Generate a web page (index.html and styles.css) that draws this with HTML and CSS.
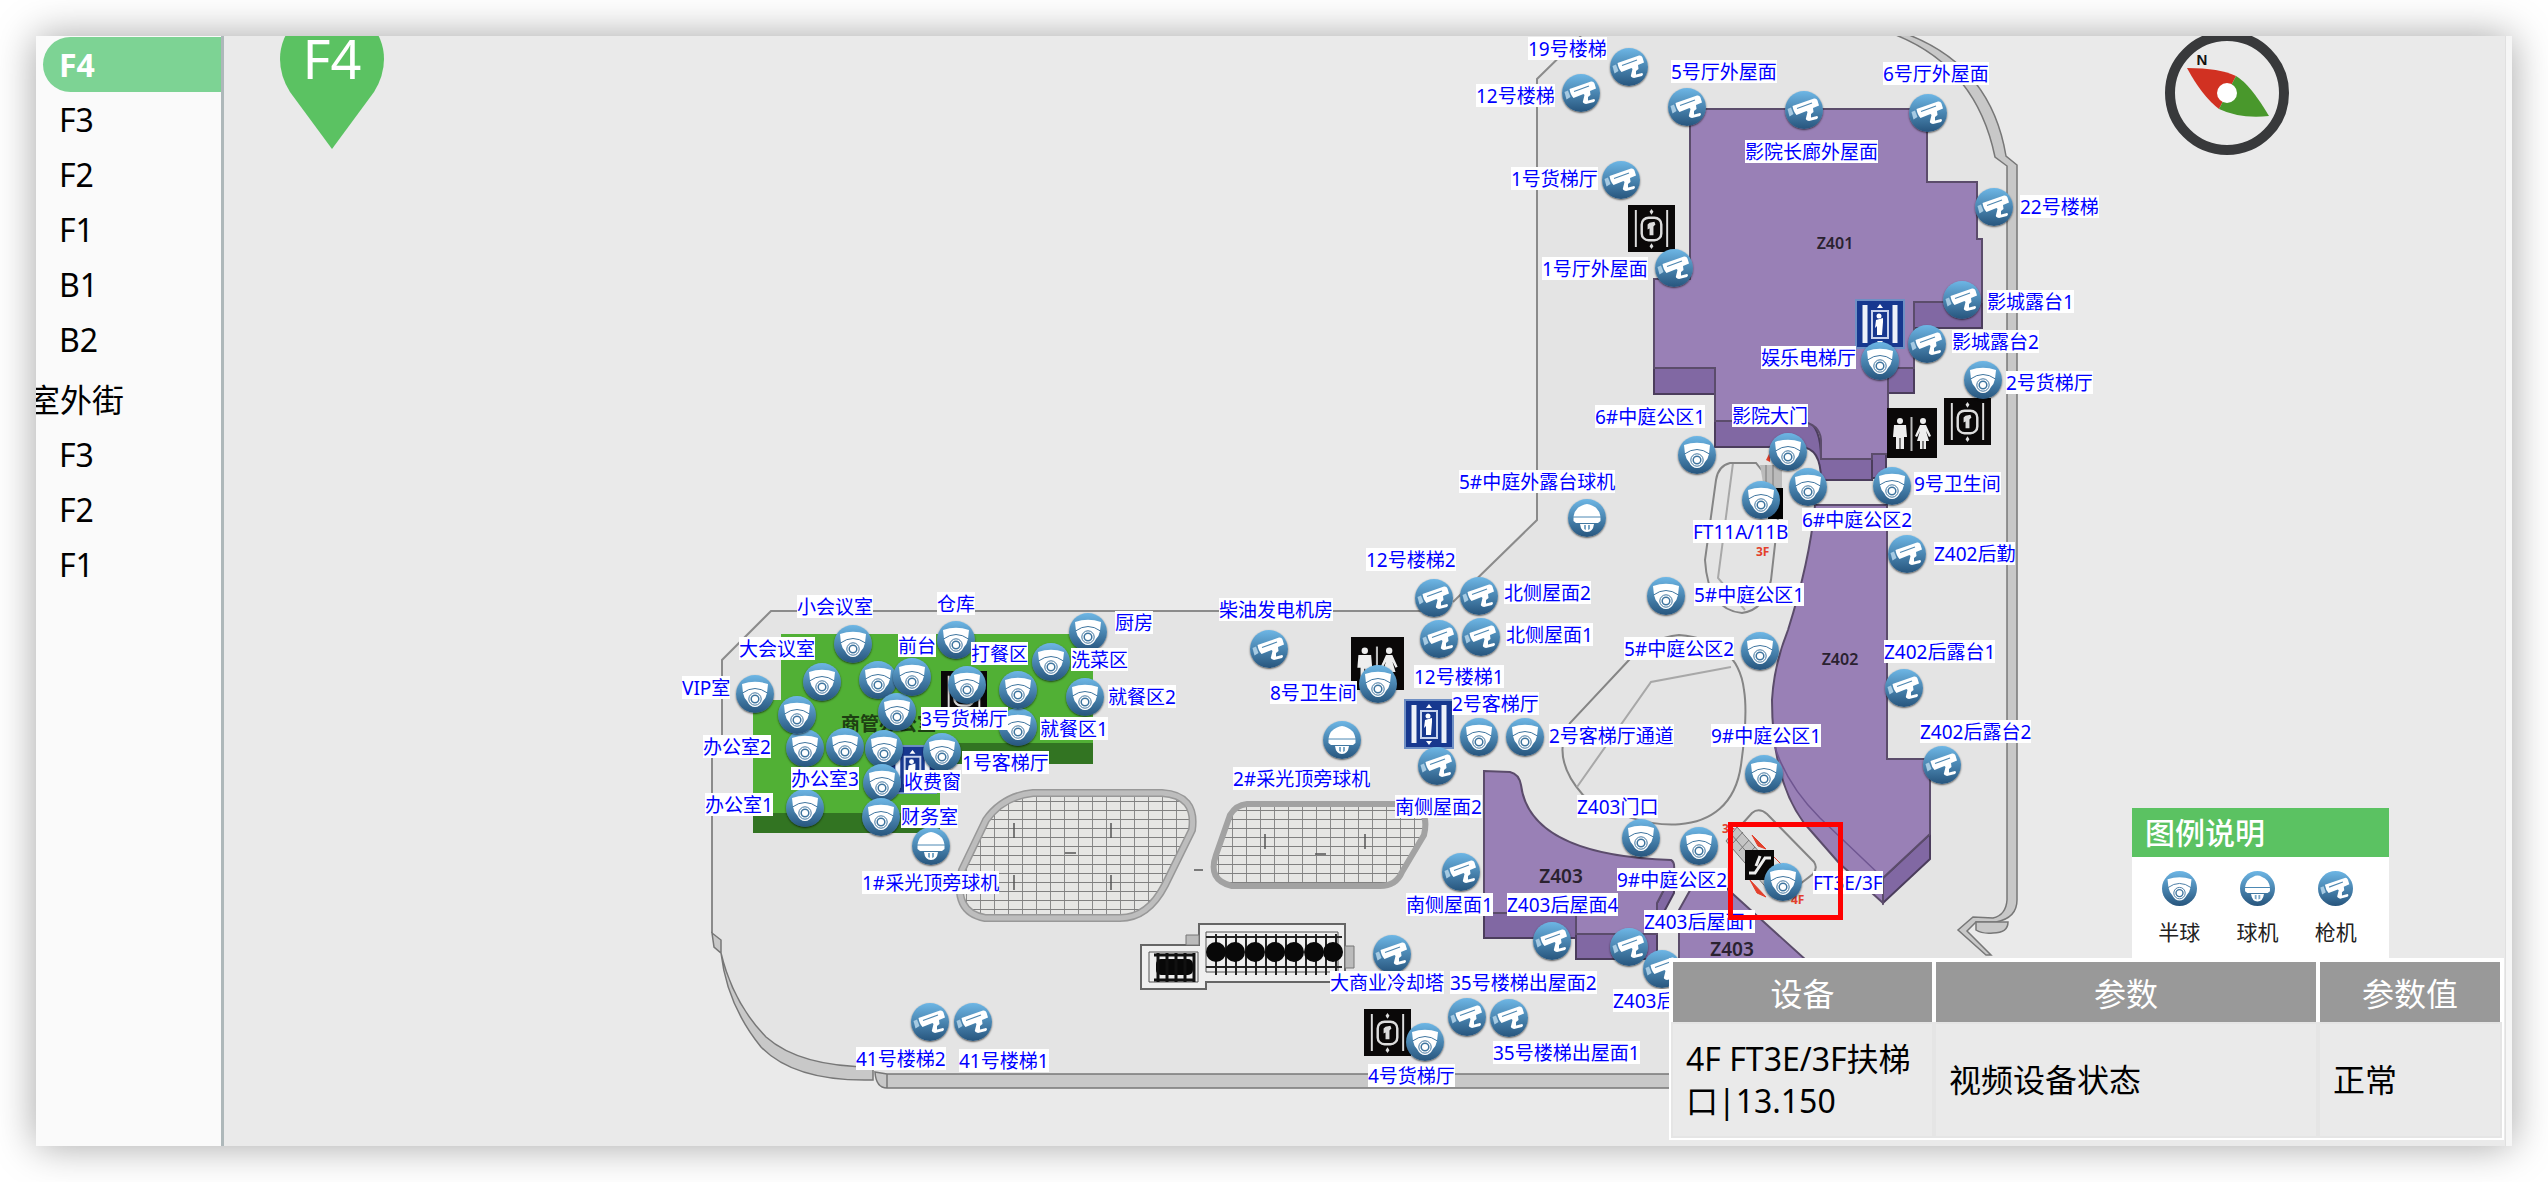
FILE: index.html
```html
<!DOCTYPE html>
<html lang="zh-CN">
<head>
<meta charset="utf-8">
<meta name="viewport" content="width=device-width, initial-scale=1">
<title>F4</title>
<link rel="stylesheet" href="styles.css">
</head>
<body>
<svg class="defs" aria-hidden="true">
  <defs>
    <linearGradient id="disc" x1="0" y1="0" x2="0" y2="1">
      <stop offset="0" stop-color="#6db6e5"/><stop offset="1" stop-color="#27557d"/>
    </linearGradient>
    <pattern id="grid" width="14" height="9" patternUnits="userSpaceOnUse">
      <rect width="14" height="9" fill="#e6e6e4"/><path d="M0 0H14M0 0V9" stroke="#808080" stroke-width="1.800"/>
    </pattern>
  </defs>
  <symbol id="dome" viewBox="0 0 38 38">
    <circle cx="19" cy="19" r="19" fill="url(#disc)"/>
    <path d="M6 9Q19 4.500 32 9L31 18Q30 23 27 26Q24 32 19 32Q14 32 11 26Q8 23 7 18Z" fill="#fff"/>
    <path d="M6.500 18Q19 9 31.500 18" fill="none" stroke="#3f759f"/>
    <circle cx="19" cy="24" r="6.200" fill="#fff" stroke="#3f759f"/><circle cx="19" cy="24" r="3.800" fill="#fff" stroke="#3f759f" stroke-width="1.500"/>
  </symbol>
  <symbol id="ball" viewBox="0 0 38 38">
    <circle cx="19" cy="19" r="19" fill="url(#disc)"/>
    <path d="M14 6.500Q19 3.500 24 6.500Q31 9 32.500 17.500H5.500Q7 9 14 6.500ZM5.500 18.500H32.500V22L30 24H8L5.500 22ZM12 25H26Q25 33 19 33Q13 33 12 25Z" fill="#fff"/>
    <path d="M16 26V30L18 31V26ZM20 26V31L22 30V26Z" fill="#7ba7c6"/>
  </symbol>
  <symbol id="gun" viewBox="0 0 38 38">
    <circle cx="19" cy="19" r="19" fill="url(#disc)"/>
    <path d="M7.500 15L29 7.500Q31.500 7 32.500 9.500L34 14.500L28 17L28.500 21L26 23V26.500L32 25Q34 26 32 28L24 30Q20 29 21 27L22.500 21L21.500 20L11.500 24Q8.500 21 7.500 15Z" fill="#fff"/>
    <path d="M12 17.500L27 12" stroke="#4d86b0" stroke-width="1.200"/>
    <path d="M2.500 18L6 16.500L8.500 23L4.500 25.500Z" fill="#a6cae2"/>
  </symbol>
  <symbol id="freight" viewBox="0 0 48 48">
    <rect width="48" height="48" fill="#0a0808"/>
    <path d="M8 5V43M40 5V43" stroke="#ddd" stroke-width="2"/>
    <rect x="14" y="13" width="20" height="23" rx="7" fill="none" stroke="#ddd" stroke-width="2.500"/>
    <path d="M22 18L27 17L28 20L26 22V31H22V24L20 25V20ZM24 4L26 7L24 10L22 7ZM24 39L26 42L24 45L22 42Z" fill="#ddd"/>
  </symbol>
  <symbol id="lift" viewBox="0 0 50 50">
    <rect width="50" height="50" fill="#6f8fc4"/><rect x="2" y="2" width="46" height="46" fill="#17388f"/>
    <path d="M10 6V44M40 6V44" stroke="#eef2fa" stroke-width="5"/>
    <rect x="17" y="12" width="16" height="27" fill="none" stroke="#c8d4ee" stroke-width="2"/>
    <circle cx="24" cy="17" r="2.500" fill="#fff"/>
    <path d="M21 21L28 19V23L27 36H22V27L20 29ZM25 5L28 9H22ZM25 46L28 42H22Z" fill="#fff"/>
  </symbol>
  <symbol id="toilet" viewBox="0 0 50 50">
    <rect width="50" height="50" fill="#0a0808"/>
    <circle cx="13" cy="13" r="3" fill="#eee"/><circle cx="36" cy="13" r="3" fill="#eee"/>
    <path d="M7 17H19L20 29H17V41H13.500V30H12.500V41H9V29H6ZM33 17H39L44 28L42 29L39 23L42 33H39V41H36.500V33H35.500V41H33V33H30L33 23L30 29L28 28Z" fill="#eee"/>
    <path d="M24.500 9V43" stroke="#bbb" stroke-width="2"/>
  </symbol>
</svg>

<main class="frame">
  <nav class="floors" aria-label="楼层">
    <a class="floor current" href="#f4">F4</a>
    <a class="floor" href="#f3">F3</a>
    <a class="floor" href="#f2">F2</a>
    <a class="floor" href="#f1">F1</a>
    <a class="floor" href="#b1">B1</a>
    <a class="floor" href="#b2">B2</a>
    <h2 class="group">室外街</h2>
    <a class="floor" href="#s3">F3</a>
    <a class="floor" href="#s2">F2</a>
    <a class="floor" href="#s1">F1</a>
  </nav>

  <section class="map">
    <div class="plan">
      <svg class="drawing" viewBox="0 0 2512 1146">
        <!-- floor slab and parapet -->
        <path d="M1882 30Q1975 60 1995 157L2006 166V905Q2004 918 1992 920L1973 918L1958 931L1990 957V1080H887V1075H873Q800 1085 761 1040Q730 1000 721 953L712 940V745H722V660L771 612H1425L1453 602L1478 577L1537 520V79L1581 30Z" fill="#e4e4e4"/>
        <path class="edge" d="M1581 36L1537 79V520L1453 602M1425 611H771L722 660V745M712 745V933"/>
        <path class="band" d="M1882 30Q1975 60 1995 157L2007 166V900Q2006 915 1993 918L1973 917L1958 930L1986 955H1991L1967 931L1976 922L1996 922Q2017 918 2017 900V165L2006 156Q1990 60 1895 30Z"/>
        <path class="band" d="M1976 922H2008Q2008 933 1993 933Q1982 934 1976 930Z"/>
        <path class="band" d="M712 933L721 940V953L714 947ZM721 953Q733 1003 766 1037Q800 1067 873 1067V1080Q795 1082 761 1047Q727 1005 721 953Z"/>
        <path class="band" d="M875 1072L887 1074H1990V1088H887Q876 1088 875 1072ZM887 1074V1088"/>
        <!-- atriums -->
        <path class="line" d="M1679 635Q1650 638 1629 660L1570 723Q1550 758 1583 795C1640 833 1730 845 1741 765Q1748 715 1744 690Q1738 640 1679 635Z"/>
        <path class="line thin" d="M1577 787L1651 682L1731 667M1733 463L1718 578L1745 610"/>
        <path class="line" d="M1756 463H1730Q1718 466 1716 480L1705 560Q1708 610 1742 613Q1765 610 1771 580L1780 500L1768 478Z"/>
        <path d="M1760 465H1782V495H1765Z" fill="#bbb"/><path d="M1766 465V490M1773 465V490" stroke="#777"/>
        <rect x="1768" y="488" width="15" height="31" fill="#000"/><path d="M1766 460L1770 452V462Z" fill="#e3402c"/>
        <text class="esc" x="1756" y="556">3F</text>
        <!-- Z401 -->
        <path class="deep" d="M1914 302H1982V328H1914ZM1654 368H1715V394H1654ZM1888 368H1914V393H1888ZM1715 421H1806Q1821 425 1821 459H1872V480H1821Q1821 447 1800 447H1715ZM1872 454H1886V478H1872Z"/>
        <path class="shop" d="M1690 109H1927V182H1977V239H1982V302H1914V368H1888V454H1872V459H1821V440Q1820 424 1800 421H1715V368H1654V279H1690Z"/>
        <text class="unit" x="1835" y="249">Z401</text>
        <!-- Z402 -->
        <path class="deep" d="M1883 878L1930 834V859L1883 903Z"/>
        <path class="shop" d="M1815 505H1887V759H1930V834L1883 878V903L1839 863L1804 823Q1772 780 1772 700Q1774 665 1788 630Q1810 560 1815 505Z"/>
        <path d="M1775 747Q1787 785 1820 818L1883 878" fill="none" stroke="#6f5691" stroke-width="1.500"/>
        <text class="unit" x="1840" y="665">Z402</text>
        <!-- Z403 -->
        <path class="deep" d="M1484 913H1576V938H1484ZM1576 934H1657V959H1576ZM1657 903L1674 870V893L1657 925Z"/>
        <path class="shop" d="M1484 771L1510 772Q1519 774 1521 785Q1530 855 1671 860Q1675 862 1674 870L1657 903V934H1576V913H1484Z"/>
        <path class="shop" d="M1679 970V910L1693 885H1723L1817 970Z"/>
        <text class="unit big" x="1561" y="883">Z403</text><text class="unit big" x="1732" y="956">Z403</text>
        <!-- escalator beside Z402 -->
        <path class="line" d="M1743 823L1752 813Q1759 807 1767 814L1814 862Q1818 868 1813 874L1800 884"/>
        <path d="M1737 827L1726 841L1770 892L1786 882Z" fill="#c4c4c4" stroke="#777"/>
        <path d="M1743 832L1733 843M1749 840L1739 851M1755 847L1745 858M1731 834L1776 886" stroke="#777"/>
        <path d="M1752 835L1766 849L1758 846ZM1750 880L1766 897L1757 893ZM1774 857L1784 867" fill="#e3402c" stroke="#e3402c"/>
        <text class="esc" x="1722" y="833">3F</text><text class="esc" x="1791" y="904">4F</text>
        <rect x="1745" y="850" width="29" height="30" fill="#0a0808"/>
        <path d="M1749 873H1755L1765 858H1771M1756 866L1760 856" fill="none" stroke="#eee" stroke-width="3"/>
        <!-- management office -->
        <path d="M753 813H940V833H753ZM940 743H1093V764H940Z" fill="#327422"/>
        <path d="M781 634H1093V743H940V813H753V700H781Z" fill="#51b035"/>
        <text class="office" x="841" y="731">商管办公室</text>
        <!-- skylights -->
        <path d="M1033 793H1162Q1197 795 1192 830L1165 885Q1148 918 1120 918H985Q952 912 962 870L986 820Q1003 796 1033 793Z" fill="url(#grid)" stroke="#989898" stroke-width="8"/>
        <path d="M1033 793H1162Q1197 795 1192 830L1165 885Q1148 918 1120 918H985Q952 912 962 870L986 820Q1003 796 1033 793Z" fill="none" stroke="#bdbdbd" stroke-width="5"/>
        <path d="M1247 804H1410Q1430 810 1424 835L1402 872Q1396 886 1380 886H1232Q1207 880 1216 855L1230 815Q1236 805 1247 804Z" fill="url(#grid)" stroke="#a2a2a2" stroke-width="6"/>
        <path d="M1014 823V838M1111 823V838M1014 875V890M1111 875V890M1265 834V849M1365 834V849M1065 853H1076M1315 854H1326M1194 870H1203" stroke="#555" stroke-width="1.500"/>
        <!-- cooling towers -->
        <path d="M1199 924H1345V982H1206V989H1141V945H1199Z" fill="#efefef" stroke="#666" stroke-width="2"/>
        <path d="M1186 935H1199V945H1186ZM1345 946H1354V968H1345Z" fill="#bbb" stroke="#777"/>
        <path d="M1206 932H1338V972H1206ZM1149 952H1198V982H1149Z" fill="#eee" stroke="#555"/>
        <path d="M1206 937H1342M1206 967H1342M1216 934V975M1226 934V975M1236 934V975M1246 934V975M1256 934V975M1266 934V975M1276 934V975M1286 934V975M1296 934V975M1306 934V975M1316 934V975M1326 934V975M1336 934V975" stroke="#222" stroke-width="2"/>
        <g fill="#080808"><circle cx="1216" cy="952" r="10"/><circle cx="1235" cy="952" r="10"/><circle cx="1255" cy="952" r="10"/><circle cx="1275" cy="952" r="10"/><circle cx="1294" cy="952" r="10"/><circle cx="1314" cy="952" r="10"/><circle cx="1333" cy="952" r="10"/><rect x="1156" y="959" width="37" height="16" rx="5"/></g>
        <path d="M1154 955H1195M1154 980H1195M1158 953V982M1167 953V982M1176 953V982M1185 953V982M1194 953V982" stroke="#111" stroke-width="3"/>
        <!-- facilities -->
        <use href="#freight" x="1628" y="205" width="47" height="47"/>
        <use href="#freight" x="1944" y="398" width="47" height="47"/>
        <use href="#freight" x="1364" y="1009" width="47" height="47"/>
        <use href="#freight" x="941" y="671" width="46" height="46"/>
        <use href="#toilet" x="1887" y="408" width="50" height="50"/>
        <use href="#toilet" x="1351" y="637" width="53" height="53"/>
        <use href="#lift" x="1855" y="299" width="50" height="50"/>
        <use href="#lift" x="1404" y="699" width="50" height="50"/>
        <use href="#lift" x="888" y="745" width="49" height="49"/>
        <!-- current floor -->
        <path d="M332 149L290 92Q280 76 280 59A52 52 0 0 1 384 59Q384 76 374 92Z" fill="#5bc262"/>
        <text class="here" x="332" y="79">F4</text>
        <!-- compass -->
        <circle cx="2227" cy="93" r="57" fill="none" stroke="#38393b" stroke-width="10"/>
        <path d="M2187 68Q2220 68 2236 76L2219 109Q2202 96 2187 68Z" fill="#d13122"/>
        <path d="M2236 76Q2250 84 2269 116Q2240 119 2219 109Z" fill="#49982c"/>
        <circle cx="2227" cy="93" r="10" fill="#fff"/>
        <text class="north" x="2202" y="65">N</text>
      </svg>

      <button class="pin" style="left:1629px;top:67px"><svg><use href="#gun"/></svg></button>
      <button class="pin" style="left:1581px;top:93px"><svg><use href="#gun"/></svg></button>
      <button class="pin" style="left:1687px;top:107px"><svg><use href="#gun"/></svg></button>
      <button class="pin" style="left:1804px;top:110px"><svg><use href="#gun"/></svg></button>
      <button class="pin" style="left:1928px;top:113px"><svg><use href="#gun"/></svg></button>
      <button class="pin" style="left:1621px;top:180px"><svg><use href="#gun"/></svg></button>
      <button class="pin" style="left:1994px;top:207px"><svg><use href="#gun"/></svg></button>
      <button class="pin" style="left:1674px;top:268px"><svg><use href="#gun"/></svg></button>
      <button class="pin" style="left:1962px;top:300px"><svg><use href="#gun"/></svg></button>
      <button class="pin" style="left:1927px;top:344px"><svg><use href="#gun"/></svg></button>
      <button class="pin" style="left:1880px;top:361px"><svg><use href="#dome"/></svg></button>
      <button class="pin" style="left:1983px;top:380px"><svg><use href="#dome"/></svg></button>
      <button class="pin" style="left:1697px;top:455px"><svg><use href="#dome"/></svg></button>
      <button class="pin" style="left:1788px;top:452px"><svg><use href="#dome"/></svg></button>
      <button class="pin" style="left:1808px;top:487px"><svg><use href="#dome"/></svg></button>
      <button class="pin" style="left:1761px;top:500px"><svg><use href="#dome"/></svg></button>
      <button class="pin" style="left:1892px;top:486px"><svg><use href="#dome"/></svg></button>
      <button class="pin" style="left:1587px;top:518px"><svg><use href="#ball"/></svg></button>
      <button class="pin" style="left:1907px;top:554px"><svg><use href="#gun"/></svg></button>
      <button class="pin" style="left:1666px;top:596px"><svg><use href="#dome"/></svg></button>
      <button class="pin" style="left:1760px;top:651px"><svg><use href="#dome"/></svg></button>
      <button class="pin" style="left:1904px;top:688px"><svg><use href="#gun"/></svg></button>
      <button class="pin" style="left:1764px;top:774px"><svg><use href="#dome"/></svg></button>
      <button class="pin" style="left:1942px;top:765px"><svg><use href="#gun"/></svg></button>
      <button class="pin" style="left:1434px;top:598px"><svg><use href="#gun"/></svg></button>
      <button class="pin" style="left:1479px;top:596px"><svg><use href="#gun"/></svg></button>
      <button class="pin" style="left:1439px;top:639px"><svg><use href="#gun"/></svg></button>
      <button class="pin" style="left:1481px;top:637px"><svg><use href="#gun"/></svg></button>
      <button class="pin" style="left:1269px;top:649px"><svg><use href="#gun"/></svg></button>
      <button class="pin" style="left:1378px;top:684px"><svg><use href="#dome"/></svg></button>
      <button class="pin" style="left:1479px;top:737px"><svg><use href="#dome"/></svg></button>
      <button class="pin" style="left:1525px;top:737px"><svg><use href="#dome"/></svg></button>
      <button class="pin" style="left:1342px;top:740px"><svg><use href="#ball"/></svg></button>
      <button class="pin" style="left:1437px;top:766px"><svg><use href="#gun"/></svg></button>
      <button class="pin" style="left:1461px;top:872px"><svg><use href="#gun"/></svg></button>
      <button class="pin" style="left:1641px;top:838px"><svg><use href="#dome"/></svg></button>
      <button class="pin" style="left:1699px;top:846px"><svg><use href="#dome"/></svg></button>
      <button class="pin" style="left:1783px;top:882px"><svg><use href="#dome"/></svg></button>
      <button class="pin" style="left:1552px;top:941px"><svg><use href="#gun"/></svg></button>
      <button class="pin" style="left:1629px;top:947px"><svg><use href="#gun"/></svg></button>
      <button class="pin" style="left:1662px;top:969px"><svg><use href="#gun"/></svg></button>
      <button class="pin" style="left:1467px;top:1017px"><svg><use href="#gun"/></svg></button>
      <button class="pin" style="left:1509px;top:1018px"><svg><use href="#gun"/></svg></button>
      <button class="pin" style="left:1425px;top:1042px"><svg><use href="#dome"/></svg></button>
      <button class="pin" style="left:1392px;top:954px"><svg><use href="#gun"/></svg></button>
      <button class="pin" style="left:930px;top:1022px"><svg><use href="#gun"/></svg></button>
      <button class="pin" style="left:973px;top:1022px"><svg><use href="#gun"/></svg></button>
      <button class="pin" style="left:853px;top:644px"><svg><use href="#dome"/></svg></button>
      <button class="pin" style="left:956px;top:640px"><svg><use href="#dome"/></svg></button>
      <button class="pin" style="left:1088px;top:632px"><svg><use href="#dome"/></svg></button>
      <button class="pin" style="left:822px;top:682px"><svg><use href="#dome"/></svg></button>
      <button class="pin" style="left:878px;top:680px"><svg><use href="#dome"/></svg></button>
      <button class="pin" style="left:897px;top:712px"><svg><use href="#dome"/></svg></button>
      <button class="pin" style="left:912px;top:677px"><svg><use href="#dome"/></svg></button>
      <button class="pin" style="left:967px;top:685px"><svg><use href="#dome"/></svg></button>
      <button class="pin" style="left:1018px;top:727px"><svg><use href="#dome"/></svg></button>
      <button class="pin" style="left:1018px;top:690px"><svg><use href="#dome"/></svg></button>
      <button class="pin" style="left:1051px;top:662px"><svg><use href="#dome"/></svg></button>
      <button class="pin" style="left:1085px;top:697px"><svg><use href="#dome"/></svg></button>
      <button class="pin" style="left:755px;top:694px"><svg><use href="#dome"/></svg></button>
      <button class="pin" style="left:805px;top:748px"><svg><use href="#dome"/></svg></button>
      <button class="pin" style="left:797px;top:715px"><svg><use href="#dome"/></svg></button>
      <button class="pin" style="left:845px;top:747px"><svg><use href="#dome"/></svg></button>
      <button class="pin" style="left:884px;top:749px"><svg><use href="#dome"/></svg></button>
      <button class="pin" style="left:942px;top:752px"><svg><use href="#dome"/></svg></button>
      <button class="pin" style="left:882px;top:783px"><svg><use href="#dome"/></svg></button>
      <button class="pin" style="left:805px;top:808px"><svg><use href="#dome"/></svg></button>
      <button class="pin" style="left:931px;top:846px"><svg><use href="#ball"/></svg></button>
      <button class="pin" style="left:881px;top:817px"><svg><use href="#dome"/></svg></button>

      <span class="tag" style="left:1528px;top:37px">19号楼梯</span>
      <span class="tag" style="left:1476px;top:84px">12号楼梯</span>
      <span class="tag" style="left:1671px;top:60px">5号厅外屋面</span>
      <span class="tag" style="left:1745px;top:140px">影院长廊外屋面</span>
      <span class="tag" style="left:1883px;top:62px">6号厅外屋面</span>
      <span class="tag" style="left:1511px;top:167px">1号货梯厅</span>
      <span class="tag" style="left:2020px;top:195px">22号楼梯</span>
      <span class="tag" style="left:1542px;top:257px">1号厅外屋面</span>
      <span class="tag" style="left:1987px;top:290px">影城露台1</span>
      <span class="tag" style="left:1952px;top:330px">影城露台2</span>
      <span class="tag" style="left:1761px;top:346px">娱乐电梯厅</span>
      <span class="tag" style="left:2006px;top:371px">2号货梯厅</span>
      <span class="tag" style="left:1595px;top:405px">6#中庭公区1</span>
      <span class="tag" style="left:1732px;top:404px">影院大门</span>
      <span class="tag" style="left:1802px;top:508px">6#中庭公区2</span>
      <span class="tag" style="left:1693px;top:520px">FT11A/11B</span>
      <span class="tag" style="left:1914px;top:472px">9号卫生间</span>
      <span class="tag" style="left:1459px;top:470px">5#中庭外露台球机</span>
      <span class="tag" style="left:1934px;top:542px">Z402后勤</span>
      <span class="tag" style="left:1694px;top:583px">5#中庭公区1</span>
      <span class="tag" style="left:1624px;top:637px">5#中庭公区2</span>
      <span class="tag" style="left:1884px;top:640px">Z402后露台1</span>
      <span class="tag" style="left:1711px;top:724px">9#中庭公区1</span>
      <span class="tag" style="left:1920px;top:720px">Z402后露台2</span>
      <span class="tag" style="left:1549px;top:724px">2号客梯厅通道</span>
      <span class="tag" style="left:1366px;top:548px">12号楼梯2</span>
      <span class="tag" style="left:1504px;top:581px">北侧屋面2</span>
      <span class="tag" style="left:1414px;top:665px">12号楼梯1</span>
      <span class="tag" style="left:1506px;top:623px">北侧屋面1</span>
      <span class="tag" style="left:1219px;top:598px">柴油发电机房</span>
      <span class="tag" style="left:1270px;top:681px">8号卫生间</span>
      <span class="tag" style="left:1452px;top:692px">2号客梯厅</span>
      <span class="tag" style="left:1233px;top:767px">2#采光顶旁球机</span>
      <span class="tag" style="left:1395px;top:795px">南侧屋面2</span>
      <span class="tag" style="left:1406px;top:893px">南侧屋面1</span>
      <span class="tag" style="left:1577px;top:795px">Z403门口</span>
      <span class="tag" style="left:1617px;top:868px">9#中庭公区2</span>
      <span class="tag" style="left:1813px;top:871px">FT3E/3F</span>
      <span class="tag" style="left:1507px;top:893px">Z403后屋面4</span>
      <span class="tag" style="left:1644px;top:910px">Z403后屋面1</span>
      <span class="tag" style="left:1613px;top:989px">Z403后屋面2</span>
      <span class="tag" style="left:1450px;top:971px">35号楼梯出屋面2</span>
      <span class="tag" style="left:1493px;top:1041px">35号楼梯出屋面1</span>
      <span class="tag" style="left:1368px;top:1064px">4号货梯厅</span>
      <span class="tag" style="left:1330px;top:971px">大商业冷却塔</span>
      <span class="tag" style="left:856px;top:1047px">41号楼梯2</span>
      <span class="tag" style="left:959px;top:1049px">41号楼梯1</span>
      <span class="tag" style="left:797px;top:595px">小会议室</span>
      <span class="tag" style="left:937px;top:592px">仓库</span>
      <span class="tag" style="left:1115px;top:611px">厨房</span>
      <span class="tag" style="left:739px;top:637px">大会议室</span>
      <span class="tag" style="left:898px;top:634px">前台</span>
      <span class="tag" style="left:971px;top:642px">打餐区</span>
      <span class="tag" style="left:1071px;top:648px">洗菜区</span>
      <span class="tag" style="left:1108px;top:685px">就餐区2</span>
      <span class="tag" style="left:682px;top:676px">VIP室</span>
      <span class="tag" style="left:921px;top:707px">3号货梯厅</span>
      <span class="tag" style="left:1040px;top:717px">就餐区1</span>
      <span class="tag" style="left:703px;top:735px">办公室2</span>
      <span class="tag" style="left:962px;top:751px">1号客梯厅</span>
      <span class="tag" style="left:791px;top:767px">办公室3</span>
      <span class="tag" style="left:904px;top:770px">收费窗</span>
      <span class="tag" style="left:705px;top:793px">办公室1</span>
      <span class="tag" style="left:901px;top:805px">财务室</span>
      <span class="tag" style="left:862px;top:871px">1#采光顶旁球机</span>
      <div class="focus"></div>

      <aside class="legend">
        <h3 class="legend-title">图例说明</h3>
        <ul class="legend-list">
          <li><svg><use href="#dome"/></svg>半球</li>
          <li><svg><use href="#ball"/></svg>球机</li>
          <li><svg><use href="#gun"/></svg>枪机</li>
        </ul>
      </aside>
    </div>

    <table class="status">
      <thead><tr><th class="device">设备</th><th class="param">参数</th><th>参数值</th></tr></thead>
      <tbody><tr><td>4F FT3E/3F扶梯口|13.150</td><td>视频设备状态</td><td>正常</td></tr></tbody>
    </table>
  </section>
  <div class="rail"></div>
</main>
</body>
</html>
```
FILE: styles.css
```css
* { box-sizing: border-box; }

body {
  margin: 0;
  min-height: 100vh;
  padding: 36px;
  display: flex;
  background: #fff;
  color: #000;
  font-family: "Noto Sans", "Noto Sans CJK SC", sans-serif;
}

.defs { position: absolute; width: 0; height: 0; }

.frame {
  flex: 1;
  min-width: 0;
  display: flex;
  overflow: hidden;
  background: #eaeaea;
  box-shadow: 0 0 38px rgba(0, 0, 0, .36);
}

/* floor list */
.floors {
  flex: 0 0 188px;
  padding-top: 1px;
  overflow: hidden;
  background: #fafafa;
  border-right: 3px solid #aeb8ba;
}
.floor {
  display: block;
  height: 55px;
  margin-left: 7px;
  padding-left: 16px;
  border-radius: 28px 0 0 28px;
  font-size: 32px;
  line-height: 55px;
  color: #000;
  text-decoration: none;
}
.floor.current { background: #7dd394; color: #fff; font-weight: 700; }
.group {
  height: 60px;
  margin: 0 0 0 -8px;
  font-size: 32px;
  font-weight: 400;
  line-height: 66px;
}

/* map */
.map { position: relative; flex: 1; min-width: 0; overflow: hidden; }
.plan { position: absolute; left: -224px; top: -36px; width: 2512px; height: 1146px; }
.drawing { display: block; width: 100%; height: 100%; }
.edge { fill: none; stroke: #8b8b8b; stroke-width: 2; }
.band { fill: #c8c8c8; stroke: #777; stroke-width: 1.500; }
.line { fill: none; stroke: #858585; stroke-width: 2; }
.line.thin { stroke: #a8a8a8; }
.shop { fill: #9980b6; stroke: #5b4c6b; stroke-width: 2; }
.deep { fill: #8168a3; stroke: #4b3d5c; stroke-width: 2; }
.unit { font-size: 16px; font-weight: 600; fill: #2a2230; text-anchor: middle; }
.unit.big { font-size: 19px; }
.office { font-size: 19px; font-weight: 700; fill: #1d4012; }
.esc { font-size: 12px; font-weight: 700; fill: #e3402c; }
.here { font-size: 54px; fill: #fff; text-anchor: middle; }
.north { font-size: 15px; fill: #111; text-anchor: middle; font-family: "Liberation Sans", sans-serif; font-weight: 700; }

.pin {
  position: absolute;
  width: 38px;
  height: 38px;
  margin: -19px 0 0 -19px;
  padding: 0;
  border: 0;
  border-radius: 50%;
  background: none;
  box-shadow: 0 1px 2px rgba(0, 0, 0, .6);
}
.pin svg { display: block; width: 38px; height: 38px; }
.tag {
  position: absolute;
  height: 23px;
  background: #fff;
  color: #00f;
  font-size: 19px;
  line-height: 25px;
  white-space: nowrap;
}
.focus { position: absolute; left: 1728px; top: 822px; width: 115px; height: 98px; border: 5px solid #f00; }

.legend { position: absolute; left: 2132px; top: 808px; width: 257px; height: 152px; background: #fff; }
.legend-title {
  margin: 0;
  padding-left: 13px;
  background: #5bc262;
  color: #fff;
  font-size: 30px;
  font-weight: 500;
  line-height: 49px;
}
.legend-list {
  display: flex;
  margin: 0;
  padding: 14px 14px 0 8px;
  list-style: none;
}
.legend-list li { flex: 1; font-size: 21px; line-height: 30px; text-align: center; color: #222; }
.legend-list svg { display: block; width: 35px; height: 35px; margin: 0 auto 11px; }

/* device status */
.status {
  position: absolute;
  right: 1px;
  bottom: 6px;
  width: 835px;
  border: 2px solid #fff;
  border-collapse: separate;
  border-spacing: 0;
  table-layout: fixed;
  background: #eaeaea;
  font-size: 32px;
}
.status th {
  height: 62px;
  padding: 0;
  border: 2px solid #fff;
  border-bottom: 0;
  background: #999;
  color: #fff;
  font-weight: 400;
}
.device { width: 263px; }
.param { width: 384px; }
.status td {
  height: 116px;
  padding: 0 13px;
  border: 2px solid #e5e5e5;
  line-height: 42px;
}

.rail { flex: 0 0 7px; background: #f6f6f6; border-left: 1px solid #e0e0e0; }
```
